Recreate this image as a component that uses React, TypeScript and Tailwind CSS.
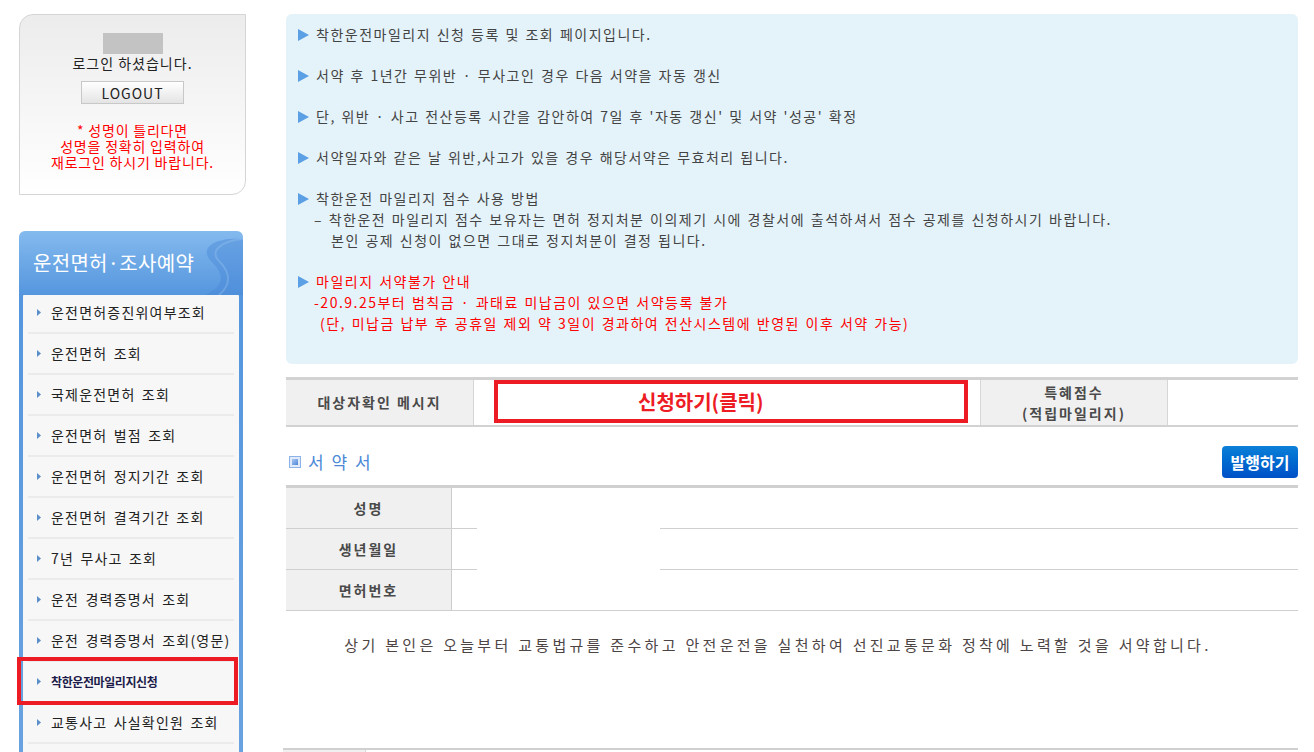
import React from "react";

const menu = [
  "운전면허증진위여부조회",
  "운전면허 조회",
  "국제운전면허 조회",
  "운전면허 벌점 조회",
  "운전면허 정지기간 조회",
  "운전면허 결격기간 조회",
  "7년 무사고 조회",
  "운전 경력증명서 조회",
  "운전 경력증명서 조회(영문)",
  "착한운전마일리지신청",
  "교통사고 사실확인원 조회",
  "",
];

const Arrow = () => (
  <svg width="11" height="12" viewBox="0 0 11 12" className="shrink-0">
    <polygon points="0,0 11,6 0,12" fill="#5b9fe4" />
  </svg>
);

const SmallArrow = () => (
  <svg width="4" height="7" viewBox="0 0 4 7" className="shrink-0">
    <polygon points="0,0 4,3.5 0,7" fill="#5b8fc9" />
  </svg>
);

const LoginBox = () => (
  <div className="w-[227px] h-[181px] rounded-tl-[14px] rounded-br-[14px] border border-[#d5d5d5] bg-gradient-to-b from-[#ececec] to-white flex flex-col items-center pt-[18px]">
    <div className="w-[60px] h-[21px] bg-[#c3c3c3]" />
    <p className="text-[14px] leading-[18px] text-[#222] tracking-[1px]">로그인 하셨습니다.</p>
    <button className="mt-[9px] w-[103px] h-[23px] border border-[#c8c8c8] bg-gradient-to-b from-white to-[#e4e4e4] text-[14px] leading-[20px] tracking-[1px] text-[#222]">
      LOGOUT
    </button>
    <p className="mt-[18px] text-center text-[14px] leading-[16px] tracking-[0.8px] text-[#ff0000]">
      * 성명이 틀리다면
      <br />
      성명을 정확히 입력하여
      <br />
      재로그인 하시기 바랍니다.
    </p>
  </div>
);

const SideMenu = () => (
  <div className="mt-[36px] w-[224px]">
    {/* header */}
    <div className="relative h-[64px] rounded-t-[6px] bg-gradient-to-b from-[#84baee] to-[#5596de] overflow-hidden flex items-center pl-[14px]">
      <svg className="absolute right-0 top-0" width="60" height="64" viewBox="0 0 60 64">
        <path d="M60 8 C30 6 16 18 28 30 C40 42 44 54 22 64 L60 64 Z" fill="#4a88d6" opacity="0.45" />
        <path d="M60 8 C38 10 26 20 36 30 C46 40 50 52 36 64" fill="none" stroke="#9cc6f2" strokeWidth="2" opacity="0.35" />
      </svg>
      <span className="relative text-[20px] text-white tracking-[0.3px]">운전면허·조사예약</span>
    </div>
    {/* list */}
    <div className="bg-gradient-to-b from-[#5596de] to-[#6aa3e0] px-[4px] -mt-[2px]">
      <div className="bg-[#f7f7f7] rounded-t-[4px]">
        {menu.map((m, i) => (
          <div key={i}>
            <div className="relative h-[39px] flex items-center pl-[14px] gap-[10px]">
              {m && <SmallArrow />}
              {i === 9 ? (
                <span className="text-[12px] font-bold text-[#1c1c4a] tracking-[-0.4px]">{m}</span>
              ) : (
                <span className="text-[14px] text-[#222] tracking-[1.2px] [word-spacing:2px]">{m}</span>
              )}
              {i === 9 && (
                <div className="absolute -left-[6px] -top-[5px] right-[1px] -bottom-[4px] border-[4px] border-[#ed1c24]" />
              )}
            </div>
            <div className="h-[2px] mx-[5px] bg-[#ebebeb]" />
          </div>
        ))}
      </div>
    </div>
  </div>
);

const InfoBox = () => (
  <div className="h-[350px] rounded-[6px] bg-[#e4f3fa] pt-[10px] pl-[12px] text-[14px] leading-[21px] text-[#444] tracking-[1.5px] flex flex-col gap-[20px] [word-spacing:1px]">
    <div className="flex items-center gap-[7px]">
      <Arrow />
      <span>착한운전마일리지 신청 등록 및 조회 페이지입니다.</span>
    </div>
    <div className="flex items-center gap-[7px]">
      <Arrow />
      <span>서약 후 1년간 무위반 · 무사고인 경우 다음 서약을 자동 갱신</span>
    </div>
    <div className="flex items-center gap-[7px]">
      <Arrow />
      <span>단, 위반 · 사고 전산등록 시간을 감안하여 7일 후 '자동 갱신' 및 서약 '성공' 확정</span>
    </div>
    <div className="flex items-center gap-[7px]">
      <Arrow />
      <span>서약일자와 같은 날 위반,사고가 있을 경우 해당서약은 무효처리 됩니다.</span>
    </div>
    <div>
      <div className="flex items-center gap-[7px]">
        <Arrow />
        <span>착한운전 마일리지 점수 사용 방법</span>
      </div>
      <p className="pl-[16px]">– 착한운전 마일리지 점수 보유자는 면허 정지처분 이의제기 시에 경찰서에 출석하셔서 점수 공제를 신청하시기 바랍니다.</p>
      <p className="pl-[33px]">본인 공제 신청이 없으면 그대로 정지처분이 결정 됩니다.</p>
    </div>
    <div className="text-[#ff0000]">
      <div className="flex items-center gap-[7px]">
        <Arrow />
        <span>마일리지 서약불가 안내</span>
      </div>
      <p className="pl-[16px]">-20.9.25부터 범칙금 · 과태료 미납금이 있으면 서약등록 불가</p>
      <p className="pl-[22px]">(단, 미납금 납부 후 공휴일 제외 약 3일이 경과하여 전산시스템에 반영된 이후 서약 가능)</p>
    </div>
  </div>
);

const labelCls = "bg-[#f0f0f0] flex flex-col items-center justify-center font-bold text-[14px] leading-[21px] tracking-[2px] text-[#4a4a4a]";

const TargetRow = () => (
  <div className="mt-[13px] border-t-[3px] border-b-[2px] border-[#d2d2d2] flex h-[50px]">
    <div className={`w-[188px] border-r border-[#d6d6d6] ${labelCls}`}>대상자확인 메시지</div>
    <div className="w-[506px] flex pl-[20px] pr-[12px] pb-[2px]">
      <div className="flex-1 border-[4px] border-[#ed1c24] flex items-center pl-[140px] text-[20px] font-bold text-[#ed1c24]">
        신청하기(클릭)
      </div>
    </div>
    <div className={`w-[188px] border-x border-[#d6d6d6] ${labelCls}`}>
      <span>특혜점수</span>
      <span>(적립마일리지)</span>
    </div>
    <div className="flex-1" />
  </div>
);

const Pledge = () => {
  const rows = ["성명", "생년월일", "면허번호"];
  return (
    <div>
      <div className="flex items-center justify-between pt-[19px] pb-[7px]">
        <div className="flex items-center gap-[7px] pl-[3px]">
          <div className="w-[12px] h-[12px] border border-[#8cb2e8] p-[2px] bg-[#dfeafb]">
            <div className="w-full h-full bg-gradient-to-br from-[#a9c8f2] to-[#4f86d8]" />
          </div>
          <span className="text-[17px] leading-[22px] text-[#4a88d8] tracking-[2px]">서 약 서</span>
        </div>
        <button className="h-[32px] w-[76px] rounded-[4px] bg-gradient-to-b from-[#0d80d8] to-[#0050c6] text-white font-bold text-[16px] leading-[20px]">
          발행하기
        </button>
      </div>
      <div className="border-t-[3px] border-[#d0d0d0]">
        {rows.map((r, i) => (
          <div key={r}>
            <div className="flex h-[40px]">
              <div className={`w-[166px] border-r border-[#cccccc] ${labelCls}`}>{r}</div>
              <div className="flex-1" />
            </div>
            {i < 2 ? (
              <div className="flex h-px">
                <div className="w-[191px] bg-[#cfcfcf]" />
                <div className="w-[183px]" />
                <div className="flex-1 bg-[#cfcfcf]" />
              </div>
            ) : (
              <div className="h-px bg-[#cfcfcf]" />
            )}
          </div>
        ))}
      </div>
      <div className="h-[137px] pt-[24px] pr-[28px] text-center text-[15px] leading-[20px] tracking-[3.3px] text-[#4d4444]">
        상기 본인은 오늘부터 교통법규를 준수하고 안전운전을 실천하여 선진교통문화 정착에 노력할 것을 서약합니다.
      </div>
      <div className="border-t-[2px] border-[#d0d0d0] -ml-[3px] flex">
        <div className="w-[83px] h-[20px] bg-[#f0f0f0] border-r border-[#d6d6d6]" />
      </div>
    </div>
  );
};

export default function App() {
  return (
    <div className="min-h-screen bg-white font-['Noto_Sans_CJK_KR','Noto_Sans',sans-serif] flex gap-[40px] pl-[19px] pt-[14px]">
      <div className="w-[227px] shrink-0">
        <LoginBox />
        <SideMenu />
      </div>
      <div className="w-[1012px] shrink-0">
        <InfoBox />
        <TargetRow />
        <Pledge />
      </div>
    </div>
  );
}
